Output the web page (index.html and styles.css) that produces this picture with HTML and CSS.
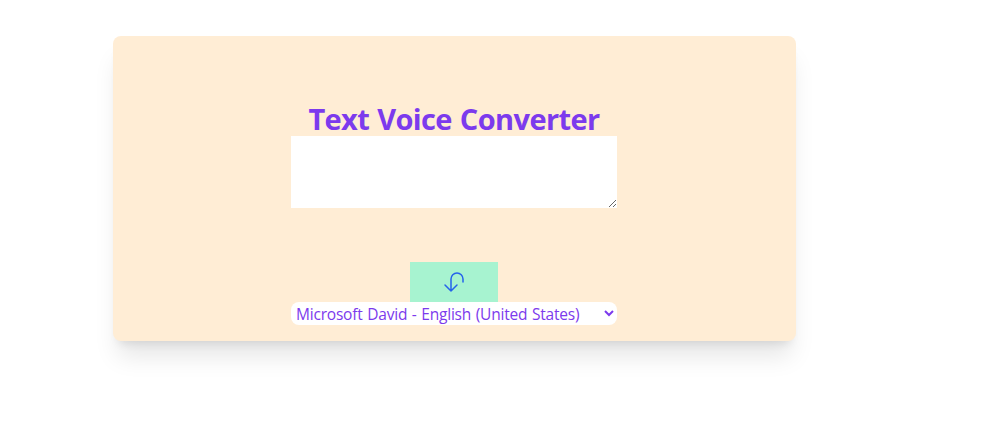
FILE: index.html
```html
<!DOCTYPE html>
<html lang="en">
<head>
<meta charset="utf-8">
<title>Text Voice Converter</title>
<link rel="stylesheet" href="styles.css">
</head>
<body>
<main class="card">
  <h1 class="title">Text Voice Converter</h1>
  <textarea class="input" aria-label="Text"></textarea>
  <button class="convert" aria-label="Convert">
    <svg width="24" height="24" viewBox="0 0 24 24" fill="none" stroke="currentColor" stroke-width="1.5" stroke-linecap="round" stroke-linejoin="round"><path d="M15 15l-6 6m0 0l-6-6m6 6V9a6 6 0 0112 0v3"/></svg>
  </button>
  <select class="voice" aria-label="Voice">
    <option>Microsoft David - English (United States)</option>
  </select>
</main>
</body>
</html>
```
FILE: styles.css
```css
* { box-sizing: border-box; }
body {
  min-height: 100vh;
  margin: 0;
  padding: 36px 0 0 113px;
  background: #fff;
  font-family: "Segoe UI", "Open Sans", "Noto Sans", sans-serif;
}
.card {
  display: flex;
  flex-direction: column;
  align-items: center;
  width: 683px;
  height: 305px;
  padding: 64px 1px 0 0;
  border-radius: 8px;
  background: #ffedd5;
  box-shadow: 0 20px 25px -5px rgba(0, 0, 0, 0.1), 0 8px 10px -6px rgba(0, 0, 0, 0.1);
}
.title {
  margin: 0;
  padding-top: 2px;
  font-size: 29px;
  line-height: 34px;
  font-weight: 700;
  letter-spacing: -0.6px;
  word-spacing: 1px;
  color: #7c3aed;
  white-space: nowrap;
}
.input {
  display: block;
  width: 326px;
  height: 72px;
  margin: 0 0 54px;
  border: 0;
  background: #fff;
  resize: both;
}
.convert {
  display: block;
  height: 40px;
  padding: 8px 32px;
  border: 0;
  background: #a7f3d0;
  color: #2563eb;
}
.convert svg { display: block; }
.voice {
  width: 326px;
  height: 23px;
  padding: 0 1px;
  border: 0;
  border-radius: 8px;
  background: #fff;
  color: #7c3aed;
  font: 400 15.5px/23px "Segoe UI", "Open Sans", "Noto Sans", sans-serif;
  letter-spacing: -0.2px;
  word-spacing: 0.8px;
}
```
